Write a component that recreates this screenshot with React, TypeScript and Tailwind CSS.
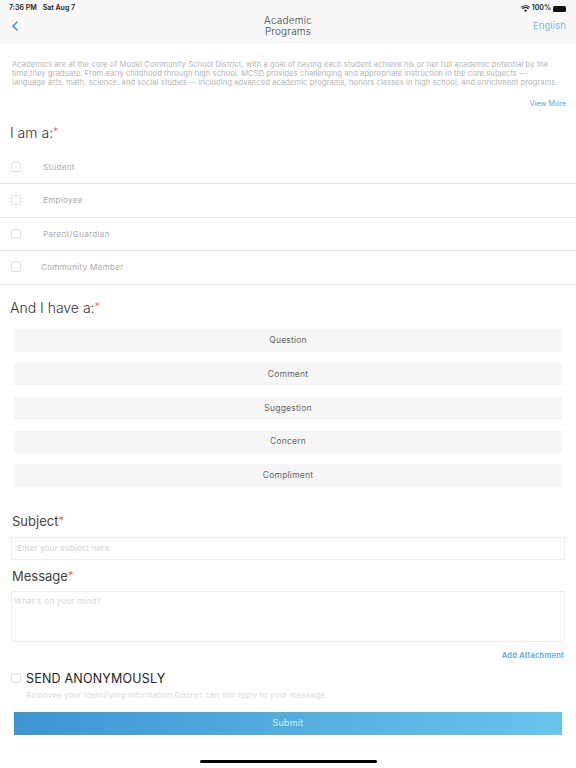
import { ChevronLeft } from "lucide-react"

const roles = ["Student", "Employee", "Parent/Guardian", "Community Member"]
const kinds = ["Question", "Comment", "Suggestion", "Concern", "Compliment"]

function Box() {
  return <span className="block w-[10px] h-[10px] rounded-[2px] border border-[#e2e2e2] bg-white shrink-0" />
}

function Star() {
  return <span className="text-[#e8654a] text-[11px] align-[2px]">*</span>
}

export default function App() {
  return (
    <div className="w-[576px] h-[768px] bg-white overflow-hidden flex flex-col font-['Inter','Liberation_Sans',sans-serif]">
      <header className="h-[44px] bg-[#f8f8f8] shrink-0">
        <div className="flex items-center justify-between pl-[9px] pr-[10px] pt-[3px] h-[14px] text-[7px] font-semibold text-[#222]">
          <div className="flex gap-[6px]">
            <span>7:36 PM</span>
            <span>Sat Aug 7</span>
          </div>
          <div className="flex items-center gap-[2px]">
            <svg width="9" height="7" viewBox="0 0 24 18" fill="#111">
              <path d="M12 18 8 13.500a6 6 0 0 1 8 0zM5.500 11 3 8.300a13 13 0 0 1 18 0L18.500 11a9.500 9.500 0 0 0-13 0zM1.700 6.900 0 5a18 18 0 0 1 24 0l-1.700 1.900a15.500 15.500 0 0 0-20.600 0z" />
            </svg>
            <span>100%</span>
            <span className="block w-[13px] h-[6px] rounded-[1.500px] bg-[#111]" />
          </div>
        </div>
        <div className="grid grid-cols-[1fr_auto_1fr] items-center px-[10px] h-[24px]">
          <ChevronLeft className="w-[16px] h-[16px] -ml-[3px] text-[#3b8fcb]" strokeWidth={2.2} />
          <div className="text-center text-[10px] leading-[11.500px] tracking-[0.2px] font-light text-[#444]">
            Academic
            <br />
            Programs
          </div>
          <span className="text-right text-[9.500px] tracking-[0.1px] text-[#7db8d8]">English</span>
        </div>
      </header>

      <p className="mt-[16px] px-[12px] text-[7.500px] leading-[9px] tracking-[0.11px] text-[#b4b4b4] whitespace-nowrap">
        Academics are at the core of Model Community School District, with a goal of having each student achieve his or her full academic potential by the
        <br />
        time they graduate. From early childhood through high school, MCSD provides challenging and appropriate instruction in the core subjects --
        <br />
        language arts, math, science, and social studies -- including advanced academic programs, honors classes in high school, and enrichment programs.
      </p>
      <div className="mt-[12px] pr-[10px] text-right text-[7.200px] leading-[9px] text-[#5aa5d6]">View More</div>

      <h2 className="mt-[14px] pl-[10px] text-[14px] leading-[20px] font-light text-[#333]">
        I am a:<Star />
      </h2>

      <div className="mt-[7.400px]">
        {roles.map((r, i) => (
          <div key={r} className="h-[33.600px] flex items-center pl-[11px] border-b border-[#e4e4e4]">
            <Box />
            <span className={`text-[8px] tracking-[0.35px] text-[#aaa] ${i === 3 ? "ml-[20px]" : "ml-[22px]"}`}>{r}</span>
          </div>
        ))}
      </div>

      <h2 className="mt-[12px] pl-[10px] text-[14px] leading-[20px] font-light text-[#333]">
        And I have a:<Star />
      </h2>

      <div className="mt-[11.600px] px-[14px] flex flex-col gap-[10.600px]">
        {kinds.map((k) => (
          <button key={k} className="h-[23px] bg-[#f6f6f6] text-[8.500px] tracking-[0.2px] text-[#666]">
            {k}
          </button>
        ))}
      </div>

      <div className="mt-[24px] px-[11px]">
        <label className="block pl-[1px] text-[13px] leading-[18px] text-[#444]">
          Subject<Star />
        </label>
        <div className="mt-[7px] h-[23px] border border-[#eeeeee] flex items-center pl-[5px] text-[8px] tracking-[0.2px] text-[#d2d2d2]">
          Enter your subject here
        </div>
        <label className="block mt-[6px] pl-[1px] text-[13px] leading-[18px] text-[#444]">
          Message<Star />
        </label>
        <div className="mt-[6px] h-[51px] border border-[#eeeeee] pl-[2px] pt-[3px] text-[8px] tracking-[0.25px] text-[#d8d8d8]">
          What's on your mind?
        </div>
        <div className="mt-[9px] pr-[1px] text-right text-[7.500px] leading-[10px] font-bold tracking-[0.2px] text-[#69b2dc]">
          Add Attachment
        </div>
      </div>

      <div className="mt-[9px] pl-[11px] flex items-center">
        <Box />
        <span className="ml-[5px] text-[12.500px] leading-[17px] tracking-[0.2px] text-[#222]">SEND ANONYMOUSLY</span>
      </div>
      <p className="mt-[3px] pl-[26px] text-[8px] leading-[10px] tracking-[0.15px] text-[#dcdcdc]">
        Removes your identifying information.District can still reply to your message.
      </p>

      <button className="mt-[12px] mx-[14px] h-[23px] shrink-0 bg-gradient-to-r from-[#3d96d3] to-[#69c5ea] text-[9px] tracking-[0.2px] text-[#d9eef9]">
        Submit
      </button>

      <div className="mt-[25px] mx-auto w-[177px] h-[3px] rounded-full bg-black shrink-0" />
    </div>
  )
}
